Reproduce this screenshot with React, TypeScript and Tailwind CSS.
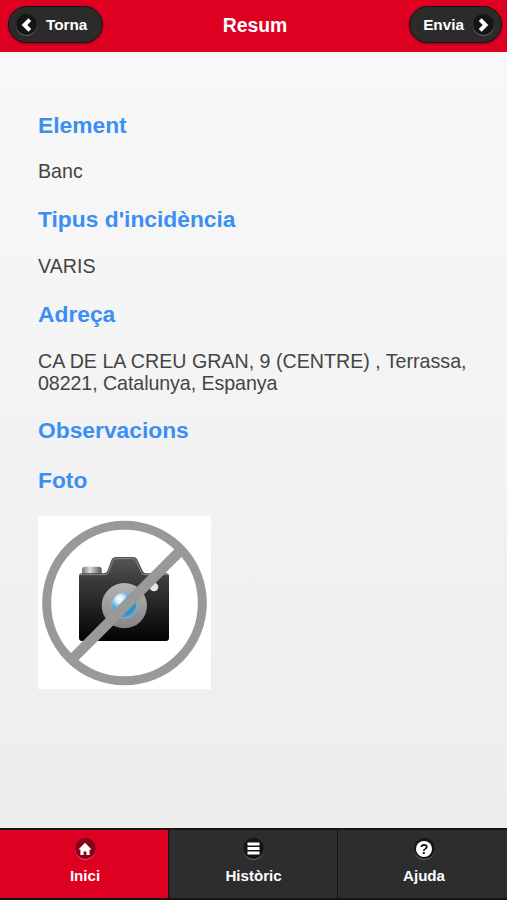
import type { ReactNode } from "react";

function Disc({ red = false, children }: { red?: boolean; children: ReactNode }) {
  return (
    <span
      className={`flex size-[21px] shrink-0 items-center justify-center rounded-full ${
        red ? "bg-[#850318] shadow-[0_1px_0_#ee5068]" : "bg-[#151515] shadow-[0_1px_0_#686868]"
      }`}
    >
      {children}
    </span>
  );
}

function Chevron({ flip = false }: { flip?: boolean }) {
  return (
    <svg viewBox="0 0 12 14" className={`h-[14px] w-[12px] ${flip ? "-scale-x-100" : ""}`}>
      <path d="M8.8 1.7 3.5 7l5.3 5.3" fill="none" stroke="#fff" strokeWidth="4" />
    </svg>
  );
}

function Camera() {
  return (
    <svg viewBox="24 18 519 519" className="block size-[173px] bg-white" role="img" aria-label="Foto">
      <defs>
        <linearGradient id="body" x1="0" y1="0" x2="0" y2="1">
          <stop offset="0" stopColor="#575757" />
          <stop offset=".35" stopColor="#353535" />
          <stop offset="1" stopColor="#030303" />
        </linearGradient>
        <linearGradient id="knob" x1="0" y1="0" x2="1" y2="0">
          <stop offset="0" stopColor="#777" />
          <stop offset=".4" stopColor="#ddd" />
          <stop offset="1" stopColor="#555" />
        </linearGradient>
        <linearGradient id="ring" x1="0" y1="0" x2="0" y2="1">
          <stop offset="0" stopColor="#b4b4b6" />
          <stop offset="1" stopColor="#858587" />
        </linearGradient>
        <radialGradient id="lens" cx=".32" cy=".25" r=".8">
          <stop offset="0" stopColor="#fff" />
          <stop offset=".2" stopColor="#d3edf8" />
          <stop offset=".42" stopColor="#5eb4df" />
          <stop offset=".75" stopColor="#2c8cc8" />
          <stop offset="1" stopColor="#49a5dc" />
        </radialGradient>
      </defs>
      <rect x="156" y="170" width="59" height="28" rx="9" fill="url(#knob)" />
      <path
        d="M156 190H222Q229 190 232 183L244 151Q248 141 258 141H309Q319 141 323 151L338 183Q341 190 348 190H408Q417 190 417 199V384Q417 393 408 393H156Q147 393 147 384V199Q147 190 156 190Z"
        fill="url(#body)"
      />
      <path
        d="M151 194H225Q232 194 235 187L248 154Q251 146 259 146H308Q316 146 319 154L334 187Q337 194 345 194H413"
        fill="none"
        stroke="#898989"
        strokeWidth="3"
      />
      <circle cx="283" cy="287" r="68" fill="url(#ring)" />
      <circle cx="283" cy="286" r="38" fill="url(#lens)" stroke="#b9b9bc" strokeWidth="2" />
      <circle cx="372" cy="231" r="13" fill="#e6e6e6" />
      <path d="M132 442 447 126" stroke="#999" strokeWidth="31" />
      <circle cx="283.5" cy="279" r="233.5" fill="none" stroke="#999" strokeWidth="27" />
    </svg>
  );
}

function Heading({ children }: { children: ReactNode }) {
  return <h2 className="text-[22.8px] leading-[28px] font-bold text-[#3b8ff2]">{children}</h2>;
}

function Value({ children }: { children: ReactNode }) {
  return <p className="text-[19.65px] leading-[22px] text-[#444]">{children}</p>;
}

const buttonClass =
  "flex h-[37px] items-center rounded-full border border-[#151515] bg-[#2b2b2b] text-[15.3px] font-bold text-white shadow-[0_1px_2px_rgba(0,0,0,0.35)]";

export default function App() {
  return (
    <div className="flex h-[900px] w-[507px] flex-col overflow-hidden bg-linear-to-b from-[#f9f9f9] to-[#ececec] font-['Liberation_Sans',Arial,sans-serif]">
      <header className="flex h-[52px] shrink-0 items-start justify-between bg-[#dd0020] pt-[6px] pr-[5px] pl-[8px]">
        <button className={`${buttonClass} w-[95px] gap-[9px] pl-[7px]`}>
          <Disc><Chevron /></Disc>
          <span className="pt-[2px]">Torna</span>
        </button>
        <h1 className="pt-[6px] pr-[2px] text-[19.4px] leading-[27px] font-bold text-white">Resum</h1>
        <button className={`${buttonClass} w-[93px] justify-end gap-[9px] pr-[7px]`}>
          <span className="pt-[2px]">Envia</span>
          <Disc><Chevron flip /></Disc>
        </button>
      </header>
      <main className="flex grow flex-col gap-[22px] px-[38px] pt-[59px]">
        <section className="flex flex-col gap-[21px]">
          <Heading>Element</Heading>
          <Value>Banc</Value>
        </section>
        <section className="mt-px flex flex-col gap-[22px]">
          <Heading>Tipus d'incidència</Heading>
          <Value>VARIS</Value>
        </section>
        <section className="mt-px flex flex-col gap-[22px]">
          <Heading>Adreça</Heading>
          <Value>
            <span className="block whitespace-nowrap">CA DE LA CREU GRAN, 9 (CENTRE) , Terrassa,</span>
            <span className="block tracking-[-0.08px]">08221, Catalunya, Espanya</span>
          </Value>
        </section>
        <Heading>Observacions</Heading>
        <section className="flex flex-col gap-[22px]">
          <Heading>Foto</Heading>
          <Camera />
        </section>
      </main>
      <footer className="flex h-[72px] shrink-0 border-t-2 border-b-2 border-[#151515] text-[15.1px] leading-[18px] font-bold text-white">
        <a className="flex w-[168px] flex-col items-center gap-[8px] bg-[#dd0020] pt-[8px] pl-[2px]">
          <Disc red>
            <svg viewBox="0 0 14 14" className="size-[14px]">
              <path d="M7 .8 13.5 7.5H11.6V13H8.4V9.5H5.6V13H2.4V7.5H.5Z" fill="#fff" />
            </svg>
          </Disc>
          Inici
        </a>
        <a className="flex w-[170px] flex-col items-center gap-[8px] border-x border-[#151515] bg-[#2d2d2d] pt-[8px] pl-px">
          <Disc>
            <svg viewBox="0 0 13 13" className="size-[13px]">
              <path d="M.5 2H12.5M.5 6.5H12.5M.5 11H12.5" stroke="#fff" strokeWidth="2.8" />
            </svg>
          </Disc>
          Històric
        </a>
        <a className="flex grow flex-col items-center gap-[8px] bg-[#2d2d2d] pt-[8px] pl-[3px]">
          <Disc>
            <span className="flex size-[16px] items-center justify-center rounded-full bg-white text-[14px] leading-none text-[#151515]">?</span>
          </Disc>
          Ajuda
        </a>
      </footer>
    </div>
  );
}
